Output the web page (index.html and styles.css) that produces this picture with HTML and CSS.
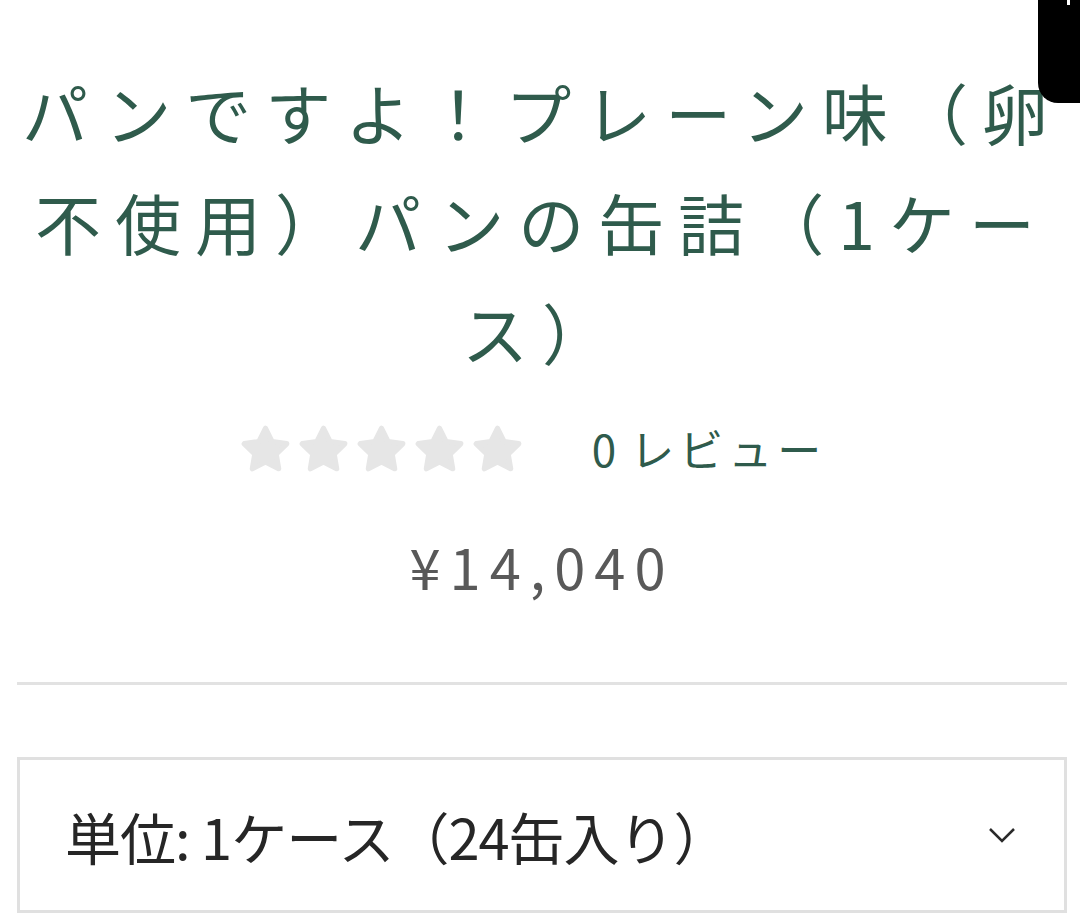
FILE: index.html
```html
<!DOCTYPE html>
<html lang="ja">
<head>
<meta charset="utf-8">
<link rel="stylesheet" href="styles.css">
</head>
<body>
<div class="corner"><span class="corner-mark"></span></div>
<main class="product">
  <h1 class="title">パンですよ！プレーン味（卵不使用）パンの缶詰（1ケース）</h1>
  <div class="rating">
    <div class="stars">
      <svg class="star" viewBox="0 0 24 24"><path d="M12 2.5L15.09 8.75L21.99 9.76L16.99 14.62L18.17 21.49L12 18.25L5.83 21.49L7.01 14.62L2.01 9.76L8.91 8.75Z"/></svg>
      <svg class="star" viewBox="0 0 24 24"><path d="M12 2.5L15.09 8.75L21.99 9.76L16.99 14.62L18.17 21.49L12 18.25L5.83 21.49L7.01 14.62L2.01 9.76L8.91 8.75Z"/></svg>
      <svg class="star" viewBox="0 0 24 24"><path d="M12 2.5L15.09 8.75L21.99 9.76L16.99 14.62L18.17 21.49L12 18.25L5.83 21.49L7.01 14.62L2.01 9.76L8.91 8.75Z"/></svg>
      <svg class="star" viewBox="0 0 24 24"><path d="M12 2.5L15.09 8.75L21.99 9.76L16.99 14.62L18.17 21.49L12 18.25L5.83 21.49L7.01 14.62L2.01 9.76L8.91 8.75Z"/></svg>
      <svg class="star" viewBox="0 0 24 24"><path d="M12 2.5L15.09 8.75L21.99 9.76L16.99 14.62L18.17 21.49L12 18.25L5.83 21.49L7.01 14.62L2.01 9.76L8.91 8.75Z"/></svg>
    </div>
    <span class="reviews">0 レビュー</span>
  </div>
  <div class="price">¥14,040</div>
  <hr class="divider">
  <div class="select">
    <span class="select-label">単位: 1ケース（24缶入り）</span>
    <svg class="chevron" viewBox="0 0 28 16"><path d="M2 2l12 12L26 2"/></svg>
  </div>
</main>
</body>
</html>
```
FILE: styles.css
```css
html, body {
  margin: 0;
  padding: 0;
  background: #ffffff;
}
body {
  font-family: "Noto Sans CJK JP", "Noto Sans", sans-serif;
  overflow: hidden;
  height: 918px;
}
.corner {
  position: absolute;
  top: 0;
  right: 0;
  width: 42px;
  height: 103px;
  background: #000;
  border-bottom-left-radius: 20px;
  z-index: 5;
}
.corner-mark {
  position: absolute;
  top: 0;
  left: 29px;
  width: 3px;
  height: 5px;
  background: #fff;
}
.product {
  display: flex;
  flex-direction: column;
  align-items: stretch;
  padding: 56px 13px 0 17px;
}
.title {
  margin: 0;
  font-weight: 400;
  font-size: 66px;
  line-height: 110px;
  letter-spacing: 14px;
  color: #2f5b4c;
  text-align: center;
}
.rating {
  display: flex;
  align-items: center;
  justify-content: center;
  gap: 69px;
  margin-top: 34px;
  height: 56px;
  padding-right: 18px;
}
.stars {
  display: flex;
  gap: 7px;
}
.star {
  width: 51px;
  height: 51px;
}
.star path {
  fill: #e6e6e6;
  stroke: #e6e6e6;
  stroke-width: 2.5;
  stroke-linejoin: round;
}
.reviews {
  font-size: 44px;
  letter-spacing: 5px;
  word-spacing: -6px;
  color: #2f5b4c;
}
.price {
  margin-top: 58px;
  text-align: center;
  font-size: 56px;
  line-height: 64px;
  letter-spacing: 9px;
  color: #595959;
}
.divider {
  margin: 84px 0 0;
  border: 0;
  height: 3px;
  background: #e2e2e2;
}
.select {
  margin-top: 72px;
  height: 150px;
  border: 3px solid #e0e0e0;
  display: flex;
  align-items: center;
  justify-content: space-between;
  padding: 0 48px 0 45px;
}
.select-label {
  font-size: 56px;
  letter-spacing: -1px;
  color: #262626;
}
.chevron {
  width: 28px;
  height: 16px;
}
.chevron path {
  fill: none;
  stroke: #2a2a2a;
  stroke-width: 2.5;
}
```
